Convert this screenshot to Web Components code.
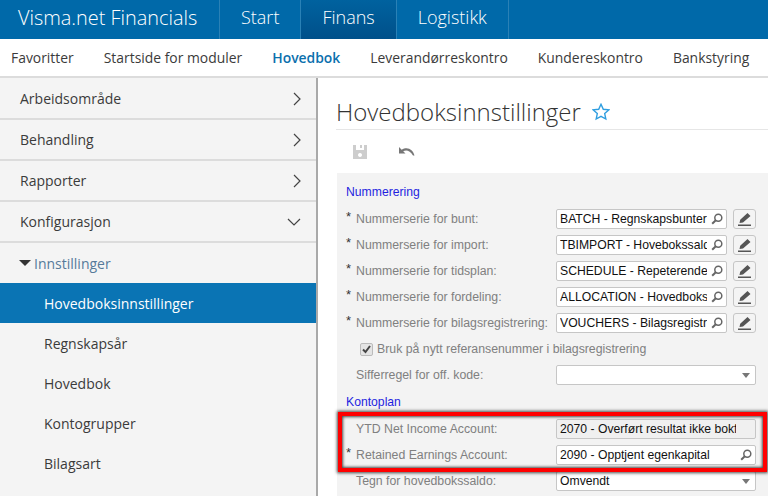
<!DOCTYPE html>
<html lang="no">
<head>
<meta charset="utf-8">
<title>Hovedboksinnstillinger</title>
<style>
  html, body { margin: 0; padding: 0; width: 768px; height: 496px; overflow: hidden; background: #fff; }
  app-shell { font-family: "Open Sans", sans-serif; }
</style>
</head>
<body>
<app-shell>
  <top-bar slot="top" brand="Visma.net Financials">
    <top-tab>Start</top-tab>
    <top-tab active>Finans</top-tab>
    <top-tab>Logistikk</top-tab>
  </top-bar>
  <sub-nav slot="sub">
    <a>Favoritter</a><a>Startside for moduler</a><a class="on">Hovedbok</a><a>Leverandørreskontro</a><a>Kundereskontro</a><a>Bankstyring</a>
  </sub-nav>
  <side-menu slot="side">
    <side-item arrow="right">Arbeidsområde</side-item>
    <side-item arrow="right">Behandling</side-item>
    <side-item arrow="right">Rapporter</side-item>
    <side-item arrow="down">Konfigurasjon</side-item>
    <side-item kind="group">Innstillinger</side-item>
    <side-item kind="leaf" active>Hovedboksinnstillinger</side-item>
    <side-item kind="leaf">Regnskapsår</side-item>
    <side-item kind="leaf">Hovedbok</side-item>
    <side-item kind="leaf">Kontogrupper</side-item>
    <side-item kind="leaf">Bilagsart</side-item>
  </side-menu>
  <settings-page slot="main" heading="Hovedboksinnstillinger">
    <form-group heading="Nummerering">
      <form-row label="Nummerserie for bunt:" required value="BATCH - Regnskapsbunter" type="lookup" edit></form-row>
      <form-row label="Nummerserie for import:" required value="TBIMPORT - Hovebokssaldo" type="lookup" edit></form-row>
      <form-row label="Nummerserie for tidsplan:" required value="SCHEDULE - Repeterende" type="lookup" edit></form-row>
      <form-row label="Nummerserie for fordeling:" required value="ALLOCATION - Hovedboksfordeling" type="lookup" edit></form-row>
      <form-row label="Nummerserie for bilagsregistrering:" required value="VOUCHERS - Bilagsregistrering" type="lookup" edit></form-row>
      <check-row>Bruk på nytt referansenummer i bilagsregistrering</check-row>
      <form-row label="Sifferregel for off. kode:" type="select"></form-row>
    </form-group>
    <form-group heading="Kontoplan">
      <form-row label="YTD Net Income Account:" value="2070 - Overført resultat ikke bokført" type="disabled"></form-row>
      <form-row label="Retained Earnings Account:" required value="2090 - Opptjent egenkapital" type="lookup"></form-row>
      <form-row label="Tegn for hovedbokssaldo:" value="Omvendt" type="select"></form-row>
    </form-group>
  </settings-page>
  <red-box slot="over"></red-box>
</app-shell>

<script>
function el(name, html) {
  customElements.define(name, class extends HTMLElement {
    connectedCallback() {
      if (this.shadowRoot) return;
      this.attachShadow({ mode: 'open' }).innerHTML = typeof html === 'function' ? html(this) : html;
    }
  });
}

el('app-shell', `
  <style>
    :host { display: grid; grid-template-columns: 318px 1fr; grid-template-rows: 39px 39px 418px; width: 768px; height: 496px; overflow: hidden; position: relative; }
    ::slotted([slot=top]), ::slotted([slot=sub]) { grid-column: 1 / 3; }
  </style>
  <slot name="top"></slot><slot name="sub"></slot><slot name="side"></slot><slot name="main"></slot><slot name="over"></slot>
`);

el('top-bar', h => `
  <style>
    :host { display: flex; background: #0069a9; color: #fff; height: 39px; }
    .brand { font-weight: 300; font-size: 19.9px; line-height: 35px; padding-left: 18px; width: 219px; box-sizing: border-box; white-space: nowrap; }
  </style>
  <div class="brand">${h.getAttribute('brand')}</div><slot></slot>
`);

el('top-tab', h => `
  <style>
    :host { display: block; box-sizing: border-box; height: 39px; padding: 0 21px 0 21px; font-weight: 300; font-size: 18px; line-height: 35px; border-left: 1px solid #2a81b6; }
    :host(:last-child) { border-right: 1px solid #2a81b6; }
    :host([active]) { background: linear-gradient(#00629f, #00508a); }
  </style>
  <slot></slot>
`);

el('sub-nav', `
  <style>
    :host { display: flex; box-sizing: border-box; height: 39px; border-bottom: 2px solid #dcdcdc; padding-left: 11px; gap: 30px; background: #fff; font-size: 13.9px; line-height: 37px; color: #3b3b3b; white-space: nowrap; }
    ::slotted(.on) { color: #0b70ad; font-weight: 600; }
  </style>
  <slot></slot>
`);

el('side-menu', `
  <style>
    :host { display: block; box-sizing: border-box; background: #f4f4f4; border-right: 2px solid #a9a9a9; height: 418px; overflow: hidden; padding-top: 1px; }
  </style>
  <slot></slot>
`);

const chev = {
  right: '<path d="M1 1l6 6-6 6" />',
  down: '<path d="M1 1l6 6 6-6" />'
};
el('side-item', h => {
  const a = h.getAttribute('arrow');
  const icon = a
    ? `<svg width="${a === 'down' ? 14 : 8}" height="${a === 'down' ? 8 : 14}" viewBox="0 0 ${a === 'down' ? 14 : 8} ${a === 'down' ? 8 : 14}" fill="none" stroke="#444" stroke-width="1.2">${chev[a]}</svg>`
    : '';
  const tri = h.getAttribute('kind') === 'group' ? '<i></i>' : '';
  return `
  <style>
    :host { display: flex; align-items: center; box-sizing: border-box; height: 41px; padding: 0 15px 0 20px; font-size: 14px; color: #3b3b3b; border-bottom: 2px solid #dcdcdc; }
    :host([kind]) { height: 40px; border-bottom: 0; }
    :host([kind=leaf]) { padding-left: 44px; }
    :host([kind=group]) { color: #567a9a; }
    :host([active]) { background: #0a74b4; color: #fff; }
    span { flex: 1; }
    i { width: 0; height: 0; border: 6px solid transparent; border-top: 6px solid #333; border-bottom: 0; margin-right: 3px; margin-left: -1px; }
  </style>
  ${tri}<span><slot></slot></span>${icon}`;
});

el('settings-page', h => `
  <style>
    :host { display: block; padding: 0 0 0 19px; background: #fff; min-width: 0; }
    h1 { margin: 19px 0 0 -1px; height: 32px; font-size: 24px; font-weight: 300; line-height: 30px; color: #333; border-bottom: 1px solid #e6e6e6; width: 432px; display: flex; align-items: flex-start; gap: 11px; }
    h1 svg { margin-top: 6px; }
    .bar { height: 43px; display: flex; align-items: center; padding-left: 16px; gap: 32px; }
    .panel { background: #f3f3f3; padding: 9px 0 0 9px; height: 330px; font-family: "Liberation Sans", Arial, sans-serif; }
  </style>
  <h1>${h.getAttribute('heading')}
    <svg width="18" height="18" viewBox="0 0 18 18" fill="none" stroke="#2f9ee0" stroke-width="1.4"><path d="M9 1.300l2.300 5 5.400.6-4 3.700 1.100 5.400L9 13.300 4.200 16l1.100-5.400-4-3.700 5.400-.6z"/></svg>
  </h1>
  <div class="bar">
    <svg width="14" height="14" viewBox="0 0 14 14"><path fill="#cdcdcd" fill-rule="evenodd" d="M0 0h14v14H0zM3 0v5h8V0h-2v3H7V0zM7 8a2 2 0 1 0 .01 0z"/></svg>
    <svg width="16" height="9" viewBox="0 0 16 9"><path fill="#777" d="M0 0v6.500h6.500L4.200 4.300C6.800 2.600 11 3 14 8.500h1.500C14 2.500 8.500-.8 2.700 2.700z"/></svg>
  </div>
  <div class="panel"><slot></slot></div>
`);

el('form-group', h => `
  <style>
    :host { display: block; margin-bottom: 4px; }
    h2 { margin: 0 0 4px; font-size: 12.2px; font-weight: 400; line-height: 20px; color: #1f1fe0; }
  </style>
  <h2>${h.getAttribute('heading')}</h2>
  <slot></slot>
`);

const lens = '<svg class="lens" width="12" height="12" viewBox="0 0 12 12" fill="none" stroke="#666"><circle cx="7.300" cy="4.700" r="3.500" stroke-width="1.500"/><path d="M4.800 7.300L1.200 10.800" stroke-width="2"/></svg>';
const pen = '<svg width="14" height="13" viewBox="0 0 14 13"><path fill="#555" d="M9.500 0l3 3-7.500 6.500L1.500 10l.7-3.200zM0 11.500h13V13H0z"/></svg>';

el('form-row', h => {
  const type = h.getAttribute('type');
  const v = h.getAttribute('value') || '';
  const end = type === 'lookup' ? lens : type === 'select' ? '<b></b>' : '<u></u>';
  const wide = h.hasAttribute('edit');
  return `
  <style>
    :host { display: grid; grid-template-columns: 10px 200px 171px 29px; align-items: center; height: 26px; font-size: 12.3px; color: #808080; white-space: nowrap; }
    .req { color: #333; font-size: 13px; line-height: 10px; align-self: start; padding-top: 6px; }
    .field { grid-column: ${wide ? '3' : '3 / 5'}; width: ${wide ? '171px' : '200px'}; box-sizing: border-box; height: 20px; border: 1px solid #c6c6c6; border-radius: 2px; background: ${type === 'disabled' ? '#f0f0f0' : '#fff'}; display: flex; align-items: center; padding: 0 3px 0 3px; color: #111; font-size: 12.2px; }
    .txt { flex: 1; overflow: hidden; min-width: 0; margin-right: 4px; }
    .lens { flex: none; }
    u { width: 12px; flex: none; }
    b { border: 4px solid transparent; border-top: 5px solid #777; border-bottom: 0; margin-right: 2px; }
    button { width: 23px; height: 20px; margin-left: 6px; padding: 0; border: 1px solid #c6c6c6; border-radius: 3px; background: #f4f4f4; display: flex; align-items: center; justify-content: center; }
  </style>
  <span class="req">${h.hasAttribute('required') ? '*' : ''}</span>
  <span>${h.getAttribute('label')}</span>
  <div class="field"><span class="txt">${v}</span>${end}</div>
  ${wide ? `<button>${pen}</button>` : ''}`;
});

el('check-row', `
  <style>
    :host { display: flex; align-items: center; height: 26px; padding-left: 14px; gap: 4px; font-size: 12.3px; color: #808080; }
    i { width: 11px; height: 11px; border: 1px solid #bbb; border-radius: 2px; background: #e4e4e4; display: flex; }
  </style>
  <i><svg width="11" height="11" viewBox="0 0 11 11" fill="none" stroke="#444" stroke-width="2"><path d="M2 5.500l2.500 2.500L9 2"/></svg></i><span><slot></slot></span>
`);

el('red-box', `
  <style>
    :host { position: absolute; left: 338px; top: 412px; width: 429px; height: 60px; box-sizing: border-box; border: 4px solid #f00; box-shadow: 0 0 3px 1px rgba(0,0,0,.7), inset 0 0 3px 1px rgba(0,0,0,.7); }
  </style>
`);
</script>
</body>
</html>
